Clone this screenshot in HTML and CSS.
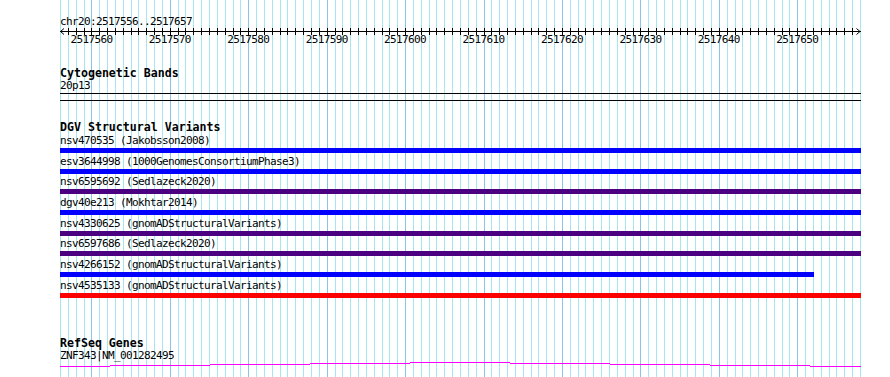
FILE: index.html
```html
<!DOCTYPE html>
<html>
<head>
    <meta charset="UTF-8" />
    <title>chr20:2517556..2517657</title>
    <link rel="stylesheet" href="styles.css">
</head>
<body>

    <div class="browser">
        <svg class="grid" id="grid" width="890" height="377"></svg>

        <div class="tracks">
            <div class="locus">chr20:2517556..2517657</div>
            <svg class="ruler" id="ruler" width="801" height="18">
                <line class="axis" x1="0" y1="3.5" x2="801" y2="3.5" />
                <path class="arrow" d="M4 0.5 L0.5 3.5 L4 6.5" />
                <path class="arrow" d="M796.5 0.5 L800 3.5 L796.5 6.5" />
                <text x="31.4" y="15">2517560</text>
                <text x="109.8" y="15">2517570</text>
                <text x="188.2" y="15">2517580</text>
                <text x="266.7" y="15">2517590</text>
                <text x="345.1" y="15">2517600</text>
                <text x="423.5" y="15">2517610</text>
                <text x="502" y="15">2517620</text>
                <text x="580.4" y="15">2517630</text>
                <text x="658.8" y="15">2517640</text>
                <text x="737.3" y="15">2517650</text>
            </svg>

            <div class="track-title cyto-title">Cytogenetic Bands</div>
            <div class="label band-name">20p13</div>
            <div class="band"></div>

            <div class="track-title dgv-title">DGV Structural Variants</div>
            <div class="features">
                <div class="feature">
                    <div class="label">nsv470535 (Jakobsson2008)</div>
                    <div class="bar gain" style="width: 801px"></div>
                </div>
                <div class="feature">
                    <div class="label">esv3644998 (1000GenomesConsortiumPhase3)</div>
                    <div class="bar gain" style="width: 801px"></div>
                </div>
                <div class="feature">
                    <div class="label">nsv6595692 (Sedlazeck2020)</div>
                    <div class="bar gainloss" style="width: 801px"></div>
                </div>
                <div class="feature">
                    <div class="label">dgv40e213 (Mokhtar2014)</div>
                    <div class="bar gain" style="width: 801px"></div>
                </div>
                <div class="feature">
                    <div class="label">nsv4330625 (gnomADStructuralVariants)</div>
                    <div class="bar gainloss" style="width: 801px"></div>
                </div>
                <div class="feature">
                    <div class="label">nsv6597686 (Sedlazeck2020)</div>
                    <div class="bar gainloss" style="width: 801px"></div>
                </div>
                <div class="feature">
                    <div class="label">nsv4266152 (gnomADStructuralVariants)</div>
                    <div class="bar gain" style="width: 754px"></div>
                </div>
                <div class="feature">
                    <div class="label">nsv4535133 (gnomADStructuralVariants)</div>
                    <div class="bar loss" style="width: 801px"></div>
                </div>
            </div>

            <div class="track-title refseq-title">RefSeq Genes</div>
            <div class="label gene-name">ZNF343|NM_001282495</div>
            <svg class="gene" width="801" height="6">
                <path d="M0 4.5H50M50 3.5H150M150 2.5H250M250 1.5H350M350 0.5H450M450 1.5H550M550 2.5H650M650 3.5H750M750 4.5H801" />
            </svg>
        </div>
    </div>

    <script>
        var SVG_NS = 'http://www.w3.org/2000/svg';
        var bases = 102;
        var pxPerBase = 800 / bases;

        function makeLine(x, y1, y2, cls) {
            var line = document.createElementNS(SVG_NS, 'line');
            line.setAttribute('x1', x);
            line.setAttribute('x2', x);
            line.setAttribute('y1', y1);
            line.setAttribute('y2', y2);
            if (cls) line.setAttribute('class', cls);
            return line;
        }

        // one grid line per base, darker every 10 bases
        var grid = document.getElementById('grid');
        for (var k = 0; k <= bases; k++) {
            var x = 60 + Math.round(k * pxPerBase) + 0.5;
            grid.appendChild(makeLine(x, 0, 377, (k - 4) % 10 === 0 ? 'major' : ''));
        }

        // ticks on the ruler
        var ruler = document.getElementById('ruler');
        for (var t = 1; t < bases; t++) {
            var tx = Math.round(t * pxPerBase) + 0.5;
            ruler.appendChild(makeLine(tx, 0, 7, 'tick'));
        }
    </script>

</body>
</html>
```

FILE: styles.css
```css
body {
    margin: 0;
    background-color: #ffffff;
    color: #000000;
    font-family: "DejaVu Sans Mono", "Liberation Mono", monospace;
}

div.browser {
    position: relative;
    width: 890px;
    height: 377px;
    overflow: hidden;
}

svg.grid {
    position: absolute;
    top: 0;
    left: 0;
}

svg.grid line {
    stroke: #a6e6ee;
    stroke-width: 1;
    shape-rendering: crispEdges;
}

svg.grid line.major {
    stroke: #88c6e8;
}

div.tracks {
    position: relative;
    display: flex;
    flex-direction: column;
    width: 801px;
    padding-top: 16px;
    padding-left: 60px;
}

.label, .locus {
    font-size: 11px;
    line-height: 12px;
    letter-spacing: -0.62px;
    white-space: nowrap;
}

svg.ruler {
    display: block;
    overflow: visible;
}

svg.ruler .axis, svg.ruler .tick {
    stroke: #000000;
    stroke-width: 1;
    shape-rendering: crispEdges;
}

svg.ruler .arrow {
    fill: none;
    stroke: #000000;
    stroke-width: 1;
}

svg.ruler text {
    font-family: "DejaVu Sans Mono", "Liberation Mono", monospace;
    font-size: 11px;
    letter-spacing: -0.62px;
    text-anchor: middle;
    fill: #000000;
}

.track-title {
    font-size: 11.6px;
    font-weight: bold;
    line-height: 13px;
    white-space: nowrap;
}

.cyto-title {
    margin-top: 20.5px;
}

.band-name {
    margin-top: 0.5px;
}

div.band {
    height: 6px;
    margin-top: 1px;
    border-top: 1px solid #000000;
    border-bottom: 1px solid #000000;
}

.dgv-title {
    margin-top: 19.5px;
}

div.features {
    display: flex;
    flex-direction: column;
    height: 166px;
    margin-top: 1.5px;
}

div.feature {
    height: 20.7px;
    flex-shrink: 0;
}

div.bar {
    height: 5px;
    margin-top: 1px;
}

div.bar.gain {
    background-color: #0000ff;
}

div.bar.gainloss {
    background-color: #4b0082;
}

div.bar.loss {
    background-color: #ff0000;
}

.refseq-title {
    margin-top: 35.5px;
}

.gene-name {
    margin-top: 0.5px;
}

svg.gene {
    display: block;
}

svg.gene path {
    fill: none;
    stroke: #ff00ff;
    stroke-width: 1;
    shape-rendering: crispEdges;
}
```
